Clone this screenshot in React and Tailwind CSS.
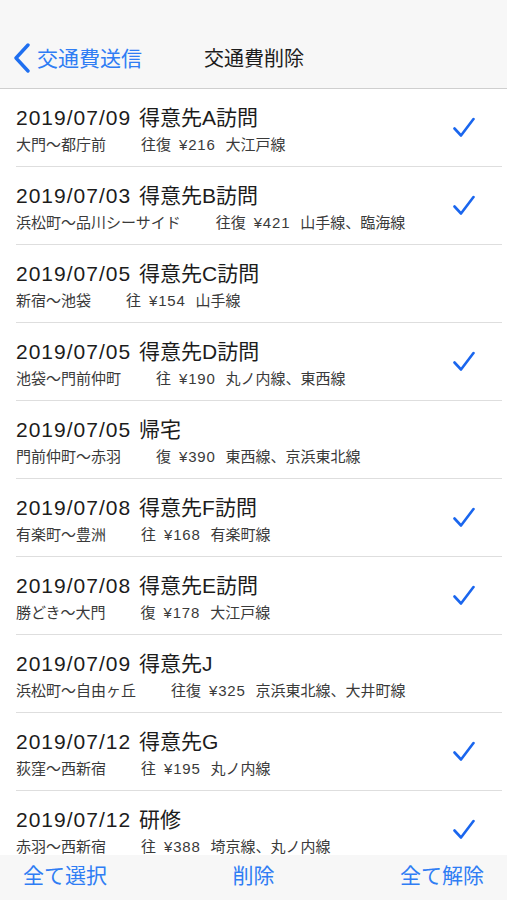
const rows = [
  { date: '2019/07/09', name: '得意先A訪問', route: '大門〜都庁前', dir: '往復', fare: '¥216', lines: '大江戸線', checked: true },
  { date: '2019/07/03', name: '得意先B訪問', route: '浜松町〜品川シーサイド', dir: '往復', fare: '¥421', lines: '山手線、臨海線', checked: true },
  { date: '2019/07/05', name: '得意先C訪問', route: '新宿〜池袋', dir: '往', fare: '¥154', lines: '山手線', checked: false },
  { date: '2019/07/05', name: '得意先D訪問', route: '池袋〜門前仲町', dir: '往', fare: '¥190', lines: '丸ノ内線、東西線', checked: true },
  { date: '2019/07/05', name: '帰宅', route: '門前仲町〜赤羽', dir: '復', fare: '¥390', lines: '東西線、京浜東北線', checked: false },
  { date: '2019/07/08', name: '得意先F訪問', route: '有楽町〜豊洲', dir: '往', fare: '¥168', lines: '有楽町線', checked: true },
  { date: '2019/07/08', name: '得意先E訪問', route: '勝どき〜大門', dir: '復', fare: '¥178', lines: '大江戸線', checked: true },
  { date: '2019/07/09', name: '得意先J', route: '浜松町〜自由ヶ丘', dir: '往復', fare: '¥325', lines: '京浜東北線、大井町線', checked: false },
  { date: '2019/07/12', name: '得意先G', route: '荻窪〜西新宿', dir: '往', fare: '¥195', lines: '丸ノ内線', checked: true },
  { date: '2019/07/12', name: '研修', route: '赤羽〜西新宿', dir: '往', fare: '¥388', lines: '埼京線、丸ノ内線', checked: true },
];

function Check() {
  return (
    <svg width="22" height="21" viewBox="0 0 22 21" fill="none">
      <path d="M1.5 11.5 L8 18.5 L20.5 2" stroke="#1a66ee" strokeWidth="2.6" strokeLinecap="round" strokeLinejoin="round" />
    </svg>
  );
}

function Row({ item }) {
  return (
    <div className="h-[78px] shrink-0 flex items-center pl-4 pr-[5px]">
      <div className="flex-1 h-full flex items-center border-b border-[#dedede] pr-[27px]">
        <div className="flex-1 pt-[3px]">
          <div className="text-[21px] leading-[25px] text-[#1c1c1c] flex whitespace-nowrap">
            <span className="tracking-[1px]">{item.date}</span>
            <span className="ml-[8px]">{item.name}</span>
          </div>
          <div className="mt-[6px] text-[15px] leading-[18px] text-[#3a3a3a] flex whitespace-nowrap">
            <span>{item.route}</span>
            <span className="ml-[35px]">{item.dir}</span>
            <span className="ml-[8px] tracking-[0.8px]">{item.fare}</span>
            <span className="ml-[10px]">{item.lines}</span>
          </div>
        </div>
        {item.checked && <Check />}
      </div>
    </div>
  );
}

export default function App() {
  return (
    <div
      className="h-[900px] w-full flex flex-col bg-white overflow-hidden"
      style={{ fontFamily: '"Liberation Sans", "Noto Sans CJK JP", sans-serif' }}
    >
      {/* Navigation bar */}
      <div className="h-[89px] shrink-0 bg-[#f7f7f7] border-b border-[#cfcfcf] flex items-end pb-[14px]">
        <div className="flex items-center pl-[13px] text-[21px] text-[#2f7df4]">
          <svg width="18" height="30" viewBox="0 0 18 30" fill="none">
            <path d="M15 2 L3 15 L15 28" stroke="#1f6ff0" strokeWidth="3.4" strokeLinecap="round" strokeLinejoin="round" />
          </svg>
          <span className="ml-[6px]">交通費送信</span>
        </div>
        <div className="ml-[62px] text-[20px] text-[#1c1c1c]">交通費削除</div>
      </div>

      {/* List */}
      <div className="flex-1 overflow-hidden flex flex-col">
        {rows.map((item, i) => (
          <Row key={i} item={item} />
        ))}
      </div>

      {/* Toolbar */}
      <div className="h-[45px] shrink-0 bg-[#f7f7f7] flex items-start justify-between px-[23px] pt-[5px] text-[21px] text-[#2f7df4]">
        <span>全て選択</span>
        <span>削除</span>
        <span>全て解除</span>
      </div>
    </div>
  );
}
